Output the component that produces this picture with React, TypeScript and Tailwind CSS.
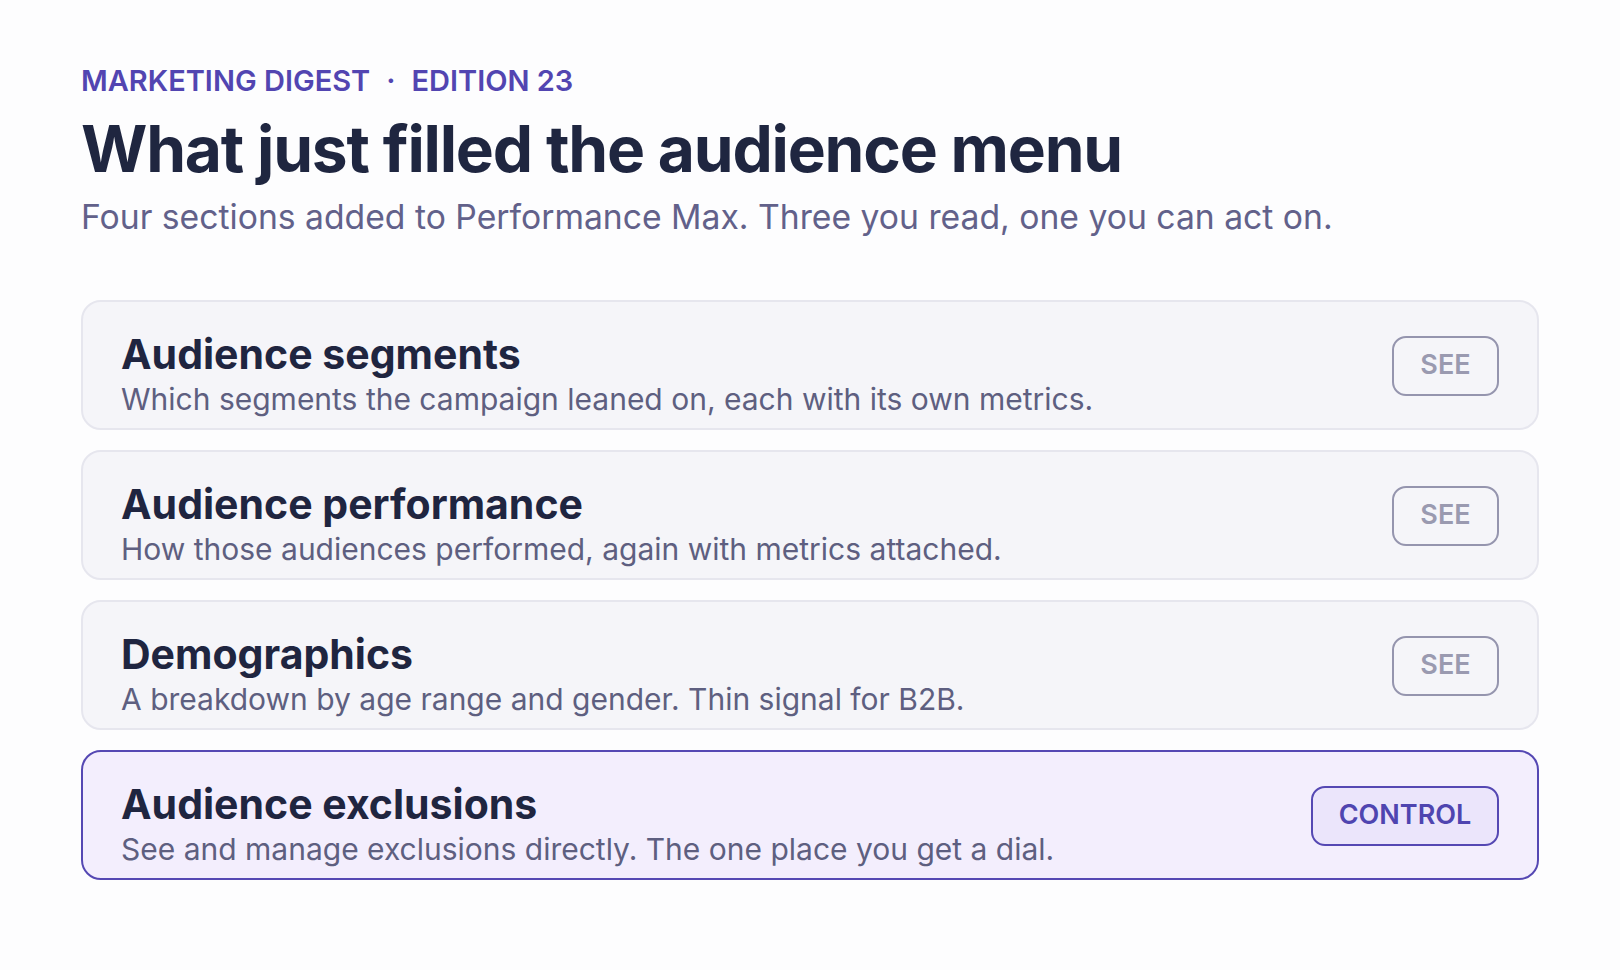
import React from "react";

type Item = { title: string; desc: string; action: "SEE" | "CONTROL" };

const items: Item[] = [
  { title: "Audience segments", desc: "Which segments the campaign leaned on, each with its own metrics.", action: "SEE" },
  { title: "Audience performance", desc: "How those audiences performed, again with metrics attached.", action: "SEE" },
  { title: "Demographics", desc: "A breakdown by age range and gender. Thin signal for B2B.", action: "SEE" },
  { title: "Audience exclusions", desc: "See and manage exclusions directly. The one place you get a dial.", action: "CONTROL" },
];

export default function App() {
  return (
    <div className="min-h-[970px] w-full bg-[#fdfdfe] px-[81px] pt-[64px] font-['Inter',sans-serif]">
      <div className="flex items-center text-[29px] leading-[34px] font-semibold text-[#5245b1]">
        <span>MARKETING DIGEST</span>
        <span className="mx-[16px]">·</span>
        <span>EDITION 23</span>
      </div>
      <h1 className="mt-[16px] text-[64px] leading-[70px] font-bold tracking-[-1.2px] text-[#1f2640]">
        What just filled the audience menu
      </h1>
      <p className="mt-[12px] text-[33.7px] leading-[42px] text-[#62618a]">
        Four sections added to Performance Max. Three you read, one you can act on.
      </p>
      <div className="mt-[62px] flex flex-col gap-[20px]">
        {items.map((it) => {
          const active = it.action === "CONTROL";
          return (
            <div
              key={it.title}
              className={
                active
                  ? "flex items-center justify-between rounded-[20px] border-2 border-[#5548b3] bg-[#f3eefd] pl-[38px] pr-[38px] pt-[28px] pb-[11px]"
                  : "flex items-center justify-between rounded-[20px] border-2 border-[#e6e6ee] bg-[#f5f5f9] pl-[38px] pr-[38px] pt-[28px] pb-[11px]"
              }
            >
              <div className="flex flex-col">
                <div className="text-[41px] leading-[48px] font-bold text-[#1f2540]">{it.title}</div>
                <div className="mt-[3px] text-[30px] leading-[36px] text-[#5e5f80]">{it.desc}</div>
              </div>
              {active ? (
                <div className="flex h-[60px] w-[188px] -translate-y-[8px] items-center justify-center rounded-[14px] border-2 border-[#5548b3] bg-[#ebe5fb] text-[27px] font-semibold text-[#4f45b0]">
                  CONTROL
                </div>
              ) : (
                <div className="flex h-[60px] w-[107px] -translate-y-[8px] items-center justify-center rounded-[14px] border-2 border-[#9595ae] text-[27px] font-semibold text-[#9a9ab0]">
                  SEE
                </div>
              )}
            </div>
          );
        })}
      </div>
    </div>
  );
}
